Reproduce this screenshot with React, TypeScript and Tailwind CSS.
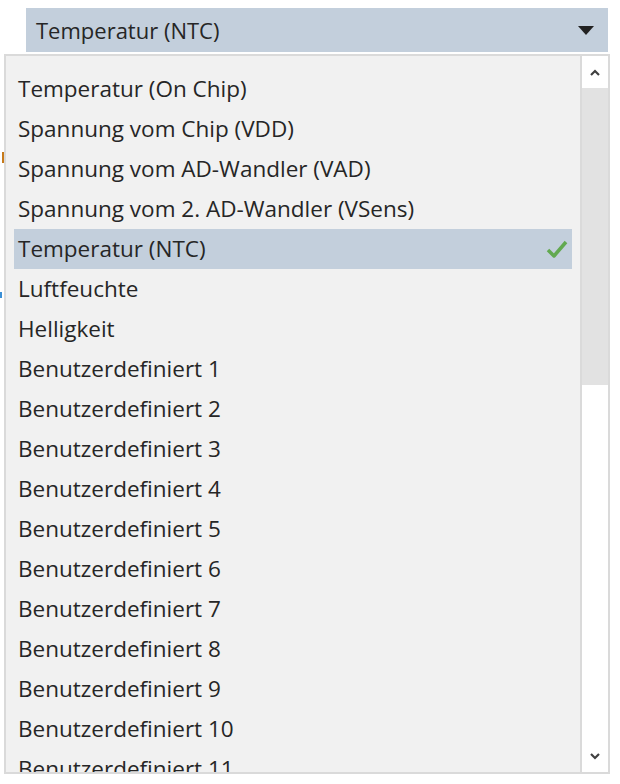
import React from "react";

const items = [
	"Temperatur (On Chip)",
	"Spannung vom Chip (VDD)",
	"Spannung vom AD-Wandler (VAD)",
	"Spannung vom 2. AD-Wandler (VSens)",
	"Temperatur (NTC)",
	"Luftfeuchte",
	"Helligkeit",
	"Benutzerdefiniert 1",
	"Benutzerdefiniert 2",
	"Benutzerdefiniert 3",
	"Benutzerdefiniert 4",
	"Benutzerdefiniert 5",
	"Benutzerdefiniert 6",
	"Benutzerdefiniert 7",
	"Benutzerdefiniert 8",
	"Benutzerdefiniert 9",
	"Benutzerdefiniert 10",
	"Benutzerdefiniert 11",
];

const selected = "Temperatur (NTC)";

const Check: React.FC = () => (
	<svg width="22" height="18" viewBox="0 0 22 18">
		<path d="M2 10 L8 16 L20 2" fill="none" stroke="#62a950" strokeWidth="3.5" strokeLinejoin="round" />
	</svg>
);

const Chevron: React.FC<{ up?: boolean }> = ({ up }) => (
	<svg width="10" height="8" viewBox="0 0 10 8">
		<path d={up ? "M1 6 L5 2 L9 6" : "M1 2 L5 6 L9 2"} fill="none" stroke="#404040" strokeWidth="2.2" />
	</svg>
);

const ListItem: React.FC<{ label: string }> = ({ label }) => {
	const isSelected = label === selected;
	return (
		<div
			className={
				isSelected
					? "h-[40px] shrink-0 flex items-center justify-between pl-[4px] pr-[4px] bg-[#c3cfdc]"
					: "h-[40px] shrink-0 flex items-center justify-between pl-[4px] pr-[4px]"
			}
		>
			<span className="whitespace-nowrap">{label}</span>
			{isSelected && <Check />}
		</div>
	);
};

export default function App() {
	return (
		<div className="relative w-[620px] h-[784px] bg-white overflow-hidden text-[22.5px] leading-none text-[#262626] font-['Open_Sans','Noto_Sans',sans-serif]">
			{/* stray pixels from the window behind */}
			<div className="absolute left-[2px] top-[152px] w-[2px] h-[11px] bg-[#c77a1a]" />
			<div className="absolute left-0 top-[292px] w-[2px] h-[6px] bg-[#3a8fd6]" />

			<div className="ml-[26px] mt-[8px] w-[582px] h-[44px] bg-[#c3cfdc] flex items-center justify-between pl-[10px] pr-[14px] text-[22px]">
				<span>Temperatur (NTC)</span>
				<svg width="16" height="9" viewBox="0 0 16 9">
					<path d="M0 0 H16 L8 9 Z" fill="#222" />
				</svg>
			</div>

			<div className="ml-[4px] mt-[2px] w-[606px] h-[720px] border-2 border-[#dadada] bg-[#f1f1f1] flex">
				<div className="flex-1 flex flex-col overflow-hidden pt-[13px] px-[8px]">
					{items.map((label) => (
						<ListItem key={label} label={label} />
					))}
				</div>
				<div className="w-[28px] border-l-2 border-[#dadada] bg-white flex flex-col pt-[2px]">
					<div className="h-[30px] flex items-center justify-center">
						<Chevron up />
					</div>
					<div className="h-[297px] bg-[#e2e2e2]" />
					<div className="flex-1" />
					<div className="h-[30px] flex items-center justify-center pb-[2px]">
						<Chevron />
					</div>
				</div>
			</div>
		</div>
	);
}
